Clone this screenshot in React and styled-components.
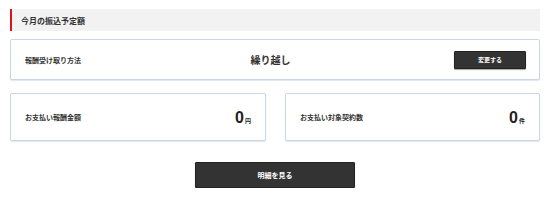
import React from 'react';
import styled, {createGlobalStyle} from 'styled-components';

const GlobalStyle = createGlobalStyle`
    html, body{
        margin:0;
        padding:0;
        background:#ffffff;
    }
    body{
        font-family:"Noto Sans CJK JP", "Liberation Sans", sans-serif;
        color:#333333;
    }
`;

const App = () =>{
    return(
        <>
        <GlobalStyle/>
        <SPage>
            <STitle>今月の振込予定額</STitle>
            <SMethodCard>
                <SLabel>報酬受け取り方法</SLabel>
                <SMethod>繰り越し</SMethod>
                <SSmallButton>変更する</SSmallButton>
            </SMethodCard>
            <SRow>
                <SStatCard>
                    <SLabel>お支払い報酬金額</SLabel>
                    <SValue>0<span>円</span></SValue>
                </SStatCard>
                <SStatCard>
                    <SLabel>お支払い対象契約数</SLabel>
                    <SValue>0<span>件</span></SValue>
                </SStatCard>
            </SRow>
            <SFooter>
                <SWideButton>明細を見る</SWideButton>
            </SFooter>
        </SPage>
        </>
    );
};

const SPage = styled.div`
    width:530px;
    padding:9px 10px 0 10px;
    display:flex;
    flex-direction:column;
`;

const STitle = styled.h2`
    margin:0;
    height:22px;
    display:flex;
    align-items:center;
    padding-left:9px;
    background:#f2f2f2;
    border-left:2px solid #d7141e;
    font-size:8px;
    font-weight:bold;
    color:#333333;
`;

const SCard = styled.div`
    border:1px solid #c9d6e3;
    border-radius:2px;
    background:#ffffff;
    box-shadow:0 1px 1px rgba(180,195,210,0.4);
    box-sizing:border-box;
    display:flex;
    align-items:center;
`;

const SMethodCard = styled(SCard)`
    margin-top:8px;
    height:41px;
    padding:0 13px 0 14px;
    display:grid;
    grid-template-columns:1fr auto 1fr;
`;

const SLabel = styled.div`
    font-size:7px;
    font-weight:bold;
    color:#333333;
`;

const SMethod = styled.div`
    font-size:10px;
    font-weight:bold;
    color:#333333;
    margin-right:10px;
`;

const SButton = styled.button`
    background:#333333;
    color:#ffffff;
    border:1px solid #222222;
    border-radius:1px;
    font-family:inherit;
    font-weight:bold;
    box-shadow:0 1px 1px rgba(0,0,0,0.35);
    cursor:pointer;
    padding:0;
`;

const SSmallButton = styled(SButton)`
    justify-self:end;
    width:72px;
    height:18px;
    font-size:6px;
`;

const SRow = styled.div`
    margin-top:13px;
    display:grid;
    grid-template-columns:256px 255px;
    justify-content:space-between;
`;

const SStatCard = styled(SCard)`
    height:48px;
    padding:0 14px 0 14px;
    justify-content:space-between;
`;

const SValue = styled.div`
    font-family:"Liberation Sans", Arial, sans-serif;
    font-size:16px;
    font-weight:bold;
    color:#222222;
    display:flex;
    align-items:baseline;
    margin-top:2px;
    span{
        font-family:"Noto Sans CJK JP", sans-serif;
        font-size:6px;
        font-weight:bold;
        margin-left:1px;
    }
`;

const SFooter = styled.div`
    margin-top:21px;
    display:flex;
    justify-content:center;
`;

const SWideButton = styled(SButton)`
    width:160px;
    height:26px;
    font-size:7px;
`;

export default App;
